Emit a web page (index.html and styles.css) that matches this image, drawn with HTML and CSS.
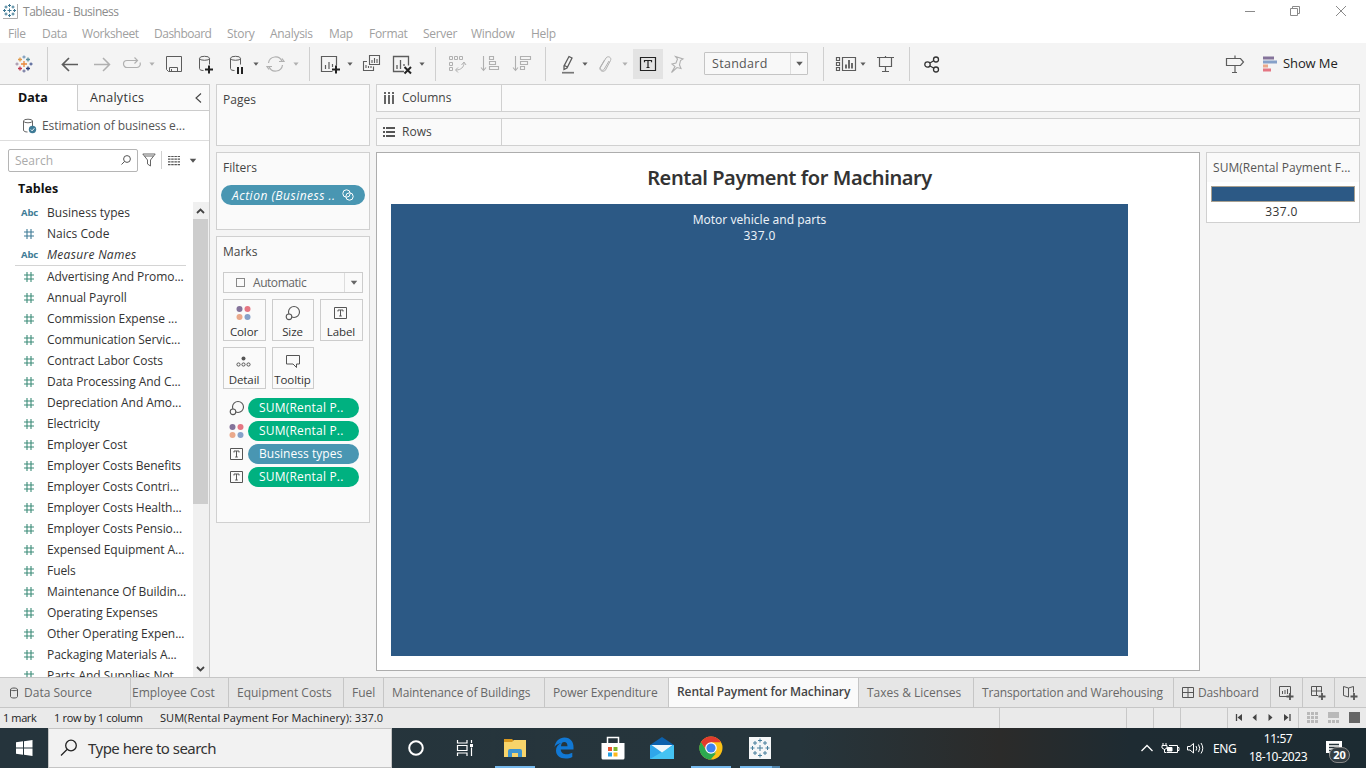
FILE: index.html
```html
<!DOCTYPE html>
<html lang="en">
<head>
<meta charset="utf-8">
<title>Tableau - Business</title>
<link rel="stylesheet" href="styles.css">
</head>
<body>
<svg class="defs" width="0" height="0">
  <symbol id="hash" viewBox="0 0 12 12"><path d="M4 1v10M8 1v10M1 4h10M1 8h10" fill="none" stroke="currentColor" stroke-width="1.1"/></symbol>
  <symbol id="caret" viewBox="0 0 6 4"><path d="M.4.5h5.200L3 3.700z" fill="currentColor"/></symbol>
  <symbol id="tbox" viewBox="0 0 16 16"><path d="M1.500 2.500h12v11h-12z" fill="none" stroke="currentColor"/><path d="M5 6.500v-1.500h5v1.500M7.500 5v6M6.200 11h2.600" fill="none" stroke="currentColor"/></symbol>
  <symbol id="dots" viewBox="0 0 16 16"><circle cx="3.500" cy="4" r="3" fill="#84739a"/><circle cx="11.500" cy="4" r="3" fill="#e57683"/><circle cx="3.500" cy="12" r="3" fill="#eaa98b"/><circle cx="11.500" cy="12" r="3" fill="#86a1c9"/></symbol>
  <symbol id="size" viewBox="0 0 16 16"><circle cx="9" cy="7" r="5.500" fill="none" stroke="currentColor" stroke-width="1.100"/><circle cx="4" cy="11.800" r="2.800" fill="#fafafa" stroke="currentColor" stroke-width="1.100"/></symbol>
</svg>
<div class="app">
  <header class="titlebar">
    <svg class="appicon" viewBox="0 0 16 16" width="16" height="16"><path d="M15.500 1v14.500H1" fill="none" stroke="#aaa"/><path d="M7.500 5.500v4M5.500 7.500h4M7.500 1v3M6 2.500h3M7.500 11v3M6 12.500h3M2.500 6v3M1 7.500h3M12.500 6v3M11 7.500h3M4 2.500v3M2.500 4h3M11 2.500v3M9.500 4h3M4 9.500v3M2.500 11h3M11 9.500v3M9.500 11h3" stroke="#3d7893" fill="none"/></svg>
    <span class="apptitle">Tableau - Business</span>
    <svg class="winbtns" viewBox="0 0 110 20" width="110" height="20" fill="none" stroke="#8a8a8a"><path d="M5 10.500h10M50.500 7.500h7v7h-7zM52.500 7.500v-2h7v7h-2M96 5l10 10M106 5l-10 10"/></svg>
  </header>
  <nav class="menubar"><span class="m-file">File</span><span class="m-data">Data</span><span class="m-work">Worksheet</span><span class="m-dash">Dashboard</span><span class="m-story">Story</span><span class="m-an">Analysis</span><span class="m-map">Map</span><span class="m-for">Format</span><span class="m-ser">Server</span><span class="m-win">Window</span><span>Help</span></nav>
  <div class="toolbar">
    <svg class="i ml12" viewBox="0 0 24 24"><g fill="none" stroke-width="1.300"><path d="M12 9v6M9 12h6" stroke="#e8873a"/><path d="M8 5.500v4M6 7.500h4" stroke="#e09a4a"/><path d="M16 5.500v4M14 7.500h4" stroke="#5b8f9c"/><path d="M8 14.500v4M6 16.500h4" stroke="#c33a50"/><path d="M16 14.500v4M14 16.500h4" stroke="#2f3f76"/><path d="M12 3.500v3M10.500 5h3" stroke="#7d9dbd"/><path d="M12 17.500v3M10.500 19h3" stroke="#7b7fa6"/><path d="M5 10.500v3M3.500 12h3" stroke="#a99aae"/><path d="M19 10.500v3M17.500 12h3" stroke="#5a6a9c"/></g></svg>
    <i class="sep ml11"></i>
    <svg class="i ml10" viewBox="0 0 24 24"><path d="M20 12.500H5M11 6l-6.500 6.500L11 19" fill="none" stroke="#5c5c5c" stroke-width="1.700"/></svg>
    <svg class="i off ml8" viewBox="0 0 24 24"><path d="M4 12.500h15M13 6l6.500 6.500L13 19" fill="none" stroke="currentColor" stroke-width="1.500"/></svg>
    <svg class="i off ml6" viewBox="0 0 24 24"><path d="M17 8.500H7a3.500 3.500 0 0 0 0 7h10a3.500 3.500 0 0 0 3-5M14.500 5.500l3 3-3 3" fill="none" stroke="currentColor" stroke-width="1.200"/></svg>
    <svg class="c off ml5"><use href="#caret"/></svg>
    <svg class="i ml7" viewBox="0 0 24 24"><path d="M4.500 4.500h15v15h-13l-2-2zM7.500 19.500v-4h8v4M9.500 19.500v-2.500" fill="none" stroke="currentColor"/></svg>
    <svg class="i ml8" viewBox="0 0 24 24"><path d="M5.500 6.500v10c0 1.500 2 2 4 2M15.500 6.500v6" fill="none" stroke="currentColor"/><ellipse cx="10.500" cy="6.300" rx="5" ry="2" fill="none" stroke="currentColor"/><path d="M15 13.500v8M11 17.500h8" stroke="#222" stroke-width="2"/></svg>
    <svg class="i ml7" viewBox="0 0 24 24"><path d="M5.500 6.500v10c0 1.500 2 2 4 2M15.500 6.500v6" fill="none" stroke="currentColor"/><ellipse cx="10.500" cy="6.300" rx="5" ry="2" fill="none" stroke="currentColor"/><path d="M13 15v7M17 15v7" stroke="#222" stroke-width="2"/></svg>
    <svg class="c ml4"><use href="#caret"/></svg>
    <svg class="i off ml5" viewBox="0 0 24 24"><path d="M4.500 11A7 7 0 0 1 18 9.500M18.500 13A7 7 0 0 1 5 14.500M15 9.500h5l-2-3M8 14.500H3l2 3" fill="none" stroke="currentColor" stroke-width="1.200"/></svg>
    <svg class="c off ml5"><use href="#caret"/></svg>
    <i class="sep ml10"></i>
    <svg class="i ml8" viewBox="0 0 24 24"><path d="M14.500 19.500h-11v-15h15v9M7.500 13v4M11 10v7M14.500 12v3" fill="none" stroke="currentColor" stroke-width="1.200"/><path d="M18 13.500v8M14 17.500h8" stroke="#222" stroke-width="2"/></svg>
    <svg class="c ml5"><use href="#caret"/></svg>
    <svg class="i ml7" viewBox="0 0 24 24"><path d="M9.500 3.500h10v9h-10zM7 9.500H3.500v9h10v-4M12 8v3M14.500 6v5M17 7v4M6 13v3M8.500 14v2M11 14v2" fill="none" stroke="currentColor" stroke-width="1.100"/></svg>
    <svg class="i ml6" viewBox="0 0 24 24"><path d="M14 19.500H3.500v-15h15v9M7 13v4M10.500 8v9M14 12v2" fill="none" stroke="currentColor" stroke-width="1.300"/><path d="M14.500 15l6.500 6.500M21 15l-6.500 6.500" stroke="#222" stroke-width="2"/></svg>
    <svg class="c ml5"><use href="#caret"/></svg>
    <i class="sep ml10"></i>
    <svg class="i off ml9" viewBox="0 0 24 24"><path d="M4.500 4.500h3v3h-3zM9.500 4.500h3v3h-3zM14.500 4.500h3v3h-3zM4.500 10.500h3v3h-3zM4.500 15.500h3v3h-3zM19 11c0 4-3 7-8 7M16.500 13l2.500-3 2 3M13 15.500L10.500 18l2.500 2.500" fill="none" stroke="currentColor"/></svg>
    <svg class="i off ml9" viewBox="0 0 24 24"><path d="M5.500 4v14M3 15.500l2.500 3 2.500-3M11.500 4.500h4v3h-4zM11.500 9.500h6v3h-6zM11.500 14.500h9v3h-9z" fill="none" stroke="currentColor" stroke-width="1.100"/></svg>
    <svg class="i off ml8" viewBox="0 0 24 24"><path d="M5.500 4v14M3 15.500l2.500 3 2.500-3M10.500 4.500h10v3h-10zM10.500 9.500h7v3h-7zM10.500 14.500h4v3h-4z" fill="none" stroke="currentColor" stroke-width="1.100"/></svg>
    <i class="sep ml11"></i>
    <svg class="i ml10" viewBox="0 0 24 24"><path d="M13 4.500l3 1.500-5 10-3 1.500v-3.500zM8.500 13.500l2.700 1.500" fill="none" stroke="currentColor" stroke-width="1.300"/><path d="M6 20.700h12" stroke="#777" stroke-width="1.700"/></svg>
    <svg class="c ml2"><use href="#caret"/></svg>
    <svg class="i off ml5" viewBox="0 0 24 24"><path d="M16 9l-5 8.500c-1.500 2-4.500 0-3.500-2.200L13 6c2-2.700 6-.500 4.500 2.500L12.500 18c-2 3-6.500.500-5.500-2.500L11.500 8" fill="none" stroke="currentColor"/></svg>
    <svg class="c off ml5"><use href="#caret"/></svg>
    <span class="active ml5"><svg viewBox="0 0 18 16" width="18" height="16"><path d="M1.500 1.500h15v13h-15zM5.500 6.200V4.500h7v1.700M9 4.500v7M7.500 11.500h3" fill="none" stroke="#222" stroke-width="1.200"/></svg></span>
    <svg class="i off ml2" viewBox="0 0 24 24"><path d="M10.500 4.500l7.500 2.500-2.500 1.500-1 4.500 1.500 3.500-4-1-5.500 5 3.500-6-3-2.500 4-1 1.500-4z" fill="none" stroke="currentColor" stroke-width="1.100"/></svg>
    <div class="fit ml15"><span>Standard</span><b><svg width="9" height="5" viewBox="0 0 6 4"><use href="#caret"/></svg></b></div>
    <i class="sep ml15"></i>
    <svg class="i ml10" viewBox="0 0 24 24"><path d="M2.500 5.500h3v3h-3zM2.500 10.500h3v3h-3zM2.500 15.500h3v3h-3zM8.500 5.500h13v13h-13z" fill="none" stroke="currentColor" stroke-width="1.200"/><path d="M12 12.500v4M15 8v8.500M18 11v5.500" stroke="currentColor" stroke-width="1.800"/></svg>
    <svg class="c ml2"><use href="#caret"/></svg>
    <svg class="i ml8" viewBox="0 0 24 24"><path d="M3 5.500h17M5.500 5.500v9h12v-9M11.500 14.500v5M8 19.500h7M11.500 4v1" fill="none" stroke="currentColor" stroke-width="1.200"/></svg>
    <i class="sep ml11"></i>
    <svg class="i ml10" viewBox="0 0 24 24"><path d="M10 11l4-2.500M10 14l4 2.300" stroke="#333" fill="none" stroke-width="1.200"/><g fill="none" stroke="#333" stroke-width="1.300"><circle cx="7.500" cy="12.500" r="2.700"/><circle cx="16" cy="7.500" r="2.500"/><circle cx="16" cy="17.500" r="2.500"/></g></svg>
    <svg class="i ml279" viewBox="0 0 24 24"><path d="M3.500 6.500h14l3 3.500-3 3.500h-14zM12 3.500v3M12 13.500v7M9 20.500h5" fill="none" stroke="currentColor" stroke-width="1.200"/></svg>
    <svg class="i ml11" viewBox="0 0 24 24"><path d="M5 4.500h11v3H5z" fill="#84739a"/><path d="M5 8.500h14v3H5z" fill="#86a1c9"/><path d="M5 12.500h5v3H5z" fill="#eaa98b"/><path d="M5 16.500h8v3H5z" fill="#e57683"/></svg>
    <span class="showme">Show Me</span>
  </div>
  <main class="work">
    <aside class="side">
      <div class="sidetabs"><b>Data</b><span>Analytics<svg width="7" height="10" viewBox="0 0 7 10"><path d="M6 .5L1 5l5 4.500" fill="none" stroke="#444" stroke-width="1.100"/></svg></span></div>
      <div class="source"><svg width="15" height="16" viewBox="0 0 15 16"><path d="M1.500 3v9c0 1.500 2 2 4 2M10.500 3v5" fill="none" stroke="#666"/><ellipse cx="6" cy="3" rx="4.500" ry="1.800" fill="none" stroke="#666"/><circle cx="10.500" cy="11.500" r="3.700" fill="#3e7b96"/><path d="M8.800 11.500l1.300 1.300 2.200-2.500" fill="none" stroke="#fff"/></svg><span>Estimation of business e...</span></div>
      <div class="searchrow">
        <div class="search"><span>Search</span><svg width="10" height="10" viewBox="0 0 10 10"><circle cx="6" cy="4" r="3.400" fill="none" stroke="#555"/><path d="M3.500 6.500L.5 9.500" stroke="#555"/></svg></div>
        <svg class="funnel" width="14" height="14" viewBox="0 0 14 14"><path d="M.8 1h12.400L8.500 7v6l-3-2V7zM2.500 3h9" fill="none" stroke="#666"/></svg>
        <i></i>
        <svg class="grid" width="12" height="11" viewBox="0 0 12 11"><path d="M0 1.500h12M0 4.200h12M0 6.900h12M0 9.600h12" stroke="#555" stroke-width="1.200" stroke-dasharray="2.500 .7"/></svg>
        <svg width="8" height="5" viewBox="0 0 6 4"><use href="#caret"/></svg>
      </div>
      <h2>Tables</h2>
      <div class="fields">
        <div class="list">
          <div class="row dim"><b>Abc</b><span>Business types</span></div>
          <div class="row dim"><svg><use href="#hash"/></svg><span>Naics Code</span></div>
          <div class="row dim"><b>Abc</b><em>Measure Names</em></div>
          <hr>
          <div class="row"><svg><use href="#hash"/></svg><span>Advertising And Promo...</span></div>
          <div class="row"><svg><use href="#hash"/></svg><span>Annual Payroll</span></div>
          <div class="row"><svg><use href="#hash"/></svg><span>Commission Expense ...</span></div>
          <div class="row"><svg><use href="#hash"/></svg><span>Communication Servic...</span></div>
          <div class="row"><svg><use href="#hash"/></svg><span>Contract Labor Costs</span></div>
          <div class="row"><svg><use href="#hash"/></svg><span>Data Processing And C...</span></div>
          <div class="row"><svg><use href="#hash"/></svg><span>Depreciation And Amo...</span></div>
          <div class="row"><svg><use href="#hash"/></svg><span>Electricity</span></div>
          <div class="row"><svg><use href="#hash"/></svg><span>Employer Cost</span></div>
          <div class="row"><svg><use href="#hash"/></svg><span>Employer Costs Benefits</span></div>
          <div class="row"><svg><use href="#hash"/></svg><span>Employer Costs Contri...</span></div>
          <div class="row"><svg><use href="#hash"/></svg><span>Employer Costs Health...</span></div>
          <div class="row"><svg><use href="#hash"/></svg><span>Employer Costs Pensio...</span></div>
          <div class="row"><svg><use href="#hash"/></svg><span>Expensed Equipment A...</span></div>
          <div class="row"><svg><use href="#hash"/></svg><span>Fuels</span></div>
          <div class="row"><svg><use href="#hash"/></svg><span>Maintenance Of Buildin...</span></div>
          <div class="row"><svg><use href="#hash"/></svg><span>Operating Expenses</span></div>
          <div class="row"><svg><use href="#hash"/></svg><span>Other Operating Expen...</span></div>
          <div class="row"><svg><use href="#hash"/></svg><span>Packaging Materials A...</span></div>
          <div class="row"><svg><use href="#hash"/></svg><span>Parts And Supplies Not...</span></div>
        </div>
        <div class="scroll"><svg width="15" height="17" viewBox="0 0 15 17"><path d="M4 11l3.500-3.500L11 11" fill="none" stroke="#444" stroke-width="1.800"/></svg><div class="thumb"></div><svg width="15" height="17" viewBox="0 0 15 17"><path d="M4 7l3.500 3.500L11 7" fill="none" stroke="#444" stroke-width="1.800"/></svg></div>
      </div>
    </aside>
    <section class="cards">
      <div class="card pages"><h3>Pages</h3></div>
      <div class="card filters"><h3>Filters</h3><div class="fpill"><em>Action (Business ..</em><svg width="12" height="12" viewBox="0 0 12 12"><circle cx="4.500" cy="4.500" r="3.700" fill="none" stroke="#fff"/><circle cx="7.500" cy="7.500" r="3.700" fill="none" stroke="#fff"/></svg></div></div>
      <div class="card marks"><h3>Marks</h3>
        <div class="marktype"><i></i><span>Automatic</span><b><svg width="8" height="5" viewBox="0 0 6 4"><use href="#caret"/></svg></b></div>
        <div class="btns">
          <div><svg><use href="#dots"/></svg><span>Color</span></div>
          <div><svg><use href="#size"/></svg><span>Size</span></div>
          <div><svg><use href="#tbox"/></svg><span>Label</span></div>
          <div><svg viewBox="0 0 16 16"><circle cx="7.500" cy="5.500" r="2" fill="#555"/><g fill="none" stroke="#555"><circle cx="2.500" cy="11.500" r="1.600"/><circle cx="7.500" cy="11.500" r="1.600"/><circle cx="12.500" cy="11.500" r="1.600"/></g></svg><span>Detail</span></div>
          <div><svg viewBox="0 0 16 16"><path d="M1.500 2.500h13v8.500h-3v3.500l-3.500-3.500h-6.500z" fill="none" stroke="#555"/></svg><span>Tooltip</span></div>
        </div>
        <div class="pills">
          <div><svg><use href="#size"/></svg><span>SUM(Rental P..</span></div>
          <div><svg><use href="#dots"/></svg><span>SUM(Rental P..</span></div>
          <div><svg><use href="#tbox"/></svg><span class="blue">Business types</span></div>
          <div><svg><use href="#tbox"/></svg><span>SUM(Rental P..</span></div>
        </div>
      </div>
    </section>
    <section class="canvas">
      <div class="shelf"><div><svg width="12" height="12" viewBox="0 0 12 12"><path d="M2 0v2M6 0v2M10 0v2M2 3v9M6 3v9M10 3v9" stroke="#555" stroke-width="1.800"/></svg><span>Columns</span></div></div>
      <div class="shelf"><div><svg width="12" height="12" viewBox="0 0 12 12"><path d="M0 2h2M0 6h2M0 10h2M3 2h9M3 6h9M3 10h9" stroke="#555" stroke-width="1.800"/></svg><span>Rows</span></div></div>
      <div class="viewrow">
        <div class="view"><h1>Rental Payment for Machinary</h1><div class="tile"><span>Motor vehicle and parts</span><span class="num">337.0</span></div></div>
        <div class="legend"><div>SUM(Rental Payment F...</div><i></i><span>337.0</span></div>
      </div>
    </section>
  </main>
  <div class="tabs">
    <div class="t1"><svg width="10" height="12" viewBox="0 0 10 12"><path d="M1.500 2.500v7c0 2 7 2 7 0v-7c0-2-7-2-7 0c0 1.500 7 1.500 7 0" fill="none" stroke="#555"/></svg><span>Data Source</span></div>
    <div class="t2"><span>Employee Cost</span></div><div class="t3"><span>Equipment Costs</span></div><div class="t4"><span>Fuel</span></div><div class="t5"><span>Maintenance of Buildings</span></div><div class="t6"><span>Power Expenditure</span></div><div class="t7"><span>Rental Payment for Machinary</span></div><div class="t8"><span>Taxes &amp; Licenses</span></div><div class="t9"><span>Transportation and Warehousing</span></div>
    <div class="t10"><svg width="12" height="12" viewBox="0 0 12 12"><path d="M.5 .5h11v10H.5zM6 .5v10M.5 5.500h11" fill="none" stroke="#555"/></svg><span>Dashboard</span></div>
    <div class="tn"><svg width="16" height="16" viewBox="0 0 16 16"><path d="M9 11.500H1.500v-10h11v7M4.500 6v3M7 5v4M9.500 4v5" fill="none" stroke="#555"/><path d="M12 8v7M8.500 11.500h7" stroke="#555" stroke-width="1.800"/></svg></div>
    <div class="tn"><svg width="16" height="16" viewBox="0 0 16 16"><path d="M8 10.500H1.500v-9h10v6M6.500 1.500v9M1.500 6h10" fill="none" stroke="#555"/><path d="M12 8v7M8.500 11.500h7" stroke="#555" stroke-width="1.800"/></svg></div>
    <div class="tn"><svg width="16" height="16" viewBox="0 0 16 16"><path d="M6.500 3L1.500 1.500v9l5 1.500zM6.500 3l5-1.500v6" fill="none" stroke="#555"/><path d="M12 8v7M8.500 11.500h7" stroke="#555" stroke-width="1.800"/></svg></div>
  </div>
  <div class="status">
    <span class="s1">1 mark</span><span class="s2">1 row by 1 column</span><span class="s3">SUM(Rental Payment For Machinery): 337.0</span>
    <i class="c1"></i><i class="c2"></i><i class="c3"></i><i class="c4"></i>
    <div class="pager"><svg width="70" height="20" viewBox="0 0 70 20"><path d="M8.500 6v7M62 6v7" stroke="#444" stroke-width="1.300"/><path d="M14 6v7L9.500 9.500zM28.500 6v7l-4-3.500zM40.500 6v7l4-3.500zM56 6v7l4.500-3.500z" fill="#444"/></svg></div>
    <div class="modes"><svg width="50" height="20" viewBox="0 0 50 20"><path d="M8 4h3v3H8zM12 4h3v3h-3zM16 4h3v3h-3zM8 8h3v3H8zM12 8h3v3h-3zM16 8h3v3h-3zM8 12h3v3H8zM12 12h3v3h-3zM16 12h3v3h-3zM29 4h11v6H29zM29 12h3v3h-3zM33 12h3v3h-3zM37 12h3v3h-3z" fill="#b9b9b9"/><path d="M50 4h11v11H50z" fill="#666"/></svg></div>
  </div>
  <footer class="taskbar">
    <div class="start"><svg width="17" height="16" viewBox="0 0 17 16"><path d="M0 2.300L7 1.300V7.500H0zM8 1.200L16.500 0v7.500H8zM0 8.500h7v6.200l-7-1zM8 8.500h8.500V16L8 14.800z" fill="#fff"/></svg></div>
    <div class="tsearch"><svg width="18" height="18" viewBox="0 0 18 18"><circle cx="11" cy="6.500" r="5.300" fill="none" stroke="#222" stroke-width="1.300"/><path d="M7 10.500L1 16.500" stroke="#222" stroke-width="1.300"/></svg><span>Type here to search</span></div>
    <div class="tb tbc"><svg width="18" height="18" viewBox="0 0 18 18"><circle cx="9" cy="9" r="6.800" fill="none" stroke="#fff" stroke-width="2"/></svg></div>
    <div class="tb"><svg width="18" height="18" viewBox="0 0 18 18"><path d="M1.500 1v3h9.500V1M1.500 17v-3h9.500v3M1.500 6.500h9.500v5H1.500zM15.500 1v3M15.500 8.500V17" fill="none" stroke="#fff" stroke-width="1.200"/><path d="M14 5h3v3h-3z" fill="#fff"/></svg></div>
    <div class="tb on tbf"><svg width="22" height="20" viewBox="0 0 22 20"><path d="M0 1h8l2 2v4H0z" fill="#d9981e"/><path d="M0 4h8l2-2h12v17H0z" fill="#f8d46a"/><path d="M4 19v-6q0-2 2-2h10q2 0 2 2v6h-4v-4H8v4z" fill="#3f95cf"/></svg></div>
    <div class="tb tbe"><svg width="20" height="22" viewBox="0 0 20 22"><path d="M.500 10C1.500 4 5.500.500 10.500.500c6 0 9 4.500 9 9.500v2.500H6.700c.3 3.500 3 4.800 6 4.800 2 0 4-.600 5.600-1.500v4.200c-2 1.100-4.300 1.500-6.500 1.500C5.500 21.500 2 18 2 13.500 2 10 4 7.200 7.200 6 5 6.300 2 7.500.500 10zM7 9.200h6.500C13.500 6.500 12.300 5 10.300 5 8.300 5 7.200 6.600 7 9.200z" fill="#1178d4"/></svg></div>
    <div class="tb tbs"><svg width="24" height="24" viewBox="0 0 24 24"><path d="M6.500 8V1.500h11V8" fill="none" stroke="#fff" stroke-width="1.500"/><path d="M.5 7h23v15q0 1.500-1.500 1.500H2Q.5 23.500.5 22z" fill="#fff"/><path d="M7 11h4v4H7z" fill="#e9532e"/><path d="M12.500 11h4v4h-4z" fill="#7eb72b"/><path d="M7 16.500h4v4H7z" fill="#25a0e5"/><path d="M12.500 16.500h4v4h-4z" fill="#fdb91c"/></svg></div>
    <div class="tb tbm"><svg width="24" height="22" viewBox="0 0 24 22"><path d="M0 8L12 0l12 8v3H0z" fill="#0c61ad"/><path d="M0 8h24v14H0z" fill="#2fa6ea"/><path d="M0 22L24 8v14z" fill="#45c3f3"/><path d="M1.500 8h21L12 15.500z" fill="#eef7fb"/></svg></div>
    <div class="tb on tbg"><svg width="24" height="24" viewBox="0 0 24 24"><circle cx="12" cy="12" r="11.500" fill="#fbc116"/><path d="M12 12L2 6.250A11.500 11.500 0 0 1 22 6.250H12z" fill="#e33b2e"/><path d="M2 6.250A11.500 11.500 0 0 0 11.500 23.500L17 15 12 12 7 14z" fill="#2da94f"/><path d="M2 6.200L9 4l5 8-6 3z" fill="#e33b2e"/><path d="M2 6.250L7 15l5 2.500H17L11.500 23.500A11.500 11.500 0 0 1 2 6.250z" fill="#2da94f"/><circle cx="12" cy="12" r="5.800" fill="#fff"/><circle cx="12" cy="12" r="4.600" fill="#3f83ef"/></svg></div>
    <div class="tb on two"><svg width="22" height="22" viewBox="0 0 22 22"><path d="M0 0h22v22H0z" fill="#f5f7f8"/><path d="M11 8v6M8 11h6M11 1.500v4M9 3.500h4M11 16.500v4M9 18.500h4M3.500 9v4M1.500 11h4M18.500 9v4M16.500 11h4M6 4v4M4 6h4M16 4v4M14 6h4M6 14v4M4 16h4M16 14v4M14 16h4" stroke="#477f9c" fill="none"/></svg></div>
    <div class="tray">
      <svg width="72" height="20" viewBox="0 0 72 20" fill="none" stroke="#fff"><path d="M1.500 13L7 7.500l5.500 5.500" stroke-width="1.300"/><path d="M29 7.500h8.500v7H27M37.500 9.500h1.500v3h-1.500M23 5v2M26 5v2M22 7.500h5v2.500l-2.500 1.500-2.500-1.500zM24.500 11v3.500h2"/><path d="M27.500 9.500H32v3.500h-4.500z" fill="#fff"/><path d="M47.500 8.500h2.500l3.500-3v9.500l-3.500-3h-2.500zM56 8q1.500 2.300 0 4.600M58.500 6.500q2.500 3.800 0 7.600M61 5q3.500 5.300 0 10.500"/></svg>
      <span class="lang">ENG</span>
      <div class="clock"><span>11:57</span><span class="date">18-10-2023</span></div>
      <div class="note"><svg width="18" height="18" viewBox="0 0 18 18"><path d="M1 1h16v12H7l-3 3v-3H1z" fill="#fff"/><path d="M4 4.500h10M4 7.500h10M4 10.500h6" stroke="#26343b" stroke-width="1.300"/></svg><b>20</b></div>
    </div>
  </footer>
</div>
</body>
</html>
```
FILE: styles.css
```css
* { box-sizing: border-box; }
html, body { margin: 0; height: 100%; overflow: hidden; }
body { font-family: "Open Sans", "Noto Sans", sans-serif; font-size: 12px; color: #333; background: #fff; }
h1, h2, h3 { margin: 0; }
span, b, em { white-space: nowrap; }
.defs { display: none; }
.app { width: 1366px; height: 768px; display: flex; flex-direction: column; background: #f4f4f4; }

.titlebar { height: 22px; flex: none; display: flex; align-items: center; padding-left: 2px; background: #fff; }
.apptitle { margin: 1px 0 0 5px; color: #8c8c8c; letter-spacing: -.46px; }
.winbtns { margin-left: auto; margin-right: 16px; }
.menubar { height: 21px; flex: none; display: flex; align-items: center; padding: 3px 0 0 8px; background: #fff; color: #a0a0a0; letter-spacing: -.3px; }
.menubar span { line-height: 16px; }
.m-file { width: 34px; } .m-data { width: 40px; } .m-work { width: 72px; letter-spacing: -.4px; } .m-dash { width: 73px; letter-spacing: -.5px; } .m-story { width: 43px; } .m-an { width: 59px; } .m-map { width: 40px; } .m-for { width: 54px; } .m-ser { width: 48px; } .m-win { width: 60px; }

.m-work { letter-spacing: -.4px; }
.toolbar { height: 41px; flex: none; display: flex; align-items: center; color: #5c5c5c; }
.i { width: 24px; height: 24px; flex: none; }
.c { width: 6px; height: 4px; flex: none; }
.off { color: #b0b0b0; }
.sep { width: 1px; height: 34px; background: #cfcfcf; flex: none; }
.ml2 { margin-left: 2px; } .ml4 { margin-left: 4px; } .ml5 { margin-left: 5px; } .ml6 { margin-left: 6px; } .ml7 { margin-left: 7px; } .ml8 { margin-left: 8px; } .ml9 { margin-left: 9px; } .ml10 { margin-left: 10px; } .ml11 { margin-left: 11px; } .ml12 { margin-left: 12px; } .ml15 { margin-left: 15px; } .ml279 { margin-left: 279px; }
.active { width: 30px; height: 30px; background: #e3e3e3; display: flex; align-items: center; justify-content: center; flex: none; }
.fit { width: 104px; height: 23px; border: 1px solid #c4c4c4; border-radius: 1px; display: flex; flex: none; line-height: 21px; background: #f8f8f8; }
.fit span { width: 85px; padding-left: 7px; letter-spacing: .3px; font-size: 12.500px; color: #555; }
.fit b { flex: 1; border-left: 1px solid #ddd; display: flex; align-items: center; justify-content: center; }
.showme { margin: -2px 0 0 1px; font-size: 13px; letter-spacing: -.1px; color: #222; }

.work { height: 593px; flex: none; display: flex; }
.side { width: 210px; flex: none; background: #fff; border-right: 1px solid #ccc; border-top: 1px solid #ccc; display: flex; flex-direction: column; }
.sidetabs { height: 26px; flex: none; display: flex; line-height: 25px; font-size: 12.500px; }
.sidetabs b { width: 77px; padding-left: 18px; color: #111; }
.sidetabs span { flex: 1; display: flex; align-items: center; border: solid #ccc; border-width: 0 0 1px 1px; padding: 0 7px 0 12px; background: #fafafa; letter-spacing: .3px; }
.sidetabs svg { margin-left: auto; }
.source { height: 30px; flex: none; border-bottom: 1px solid #ddd; display: flex; align-items: center; padding-left: 22px; color: #555; }
.source span { margin: -1px 0 0 5px; letter-spacing: -.08px; }
.searchrow { height: 38px; flex: none; display: flex; align-items: center; padding-left: 8px; color: #555; }
.search { width: 130px; height: 23px; border: 1px solid #b5b5b5; border-radius: 2px; display: flex; align-items: center; justify-content: space-between; padding: 0 6px; color: #aaa; }
.funnel { margin-left: 4px; }
.searchrow i { width: 1px; height: 18px; background: #d0d0d0; margin: 0 6px 0 5px; }
.grid { margin-right: 9px; }
.side h2 { height: 23px; flex: none; font-size: 12.500px; line-height: 17px; padding: 1px 0 0 18px; color: #111; }
.fields { flex: 1; min-height: 0; display: flex; }
.list { width: 193px; overflow: hidden; letter-spacing: -.06px; }
.row { height: 21px; display: flex; align-items: center; padding-left: 21px; color: #3c8c78; }
.row.dim { color: #3e7b96; letter-spacing: .03px; }
.row b { width: 26px; font-size: 9.500px; letter-spacing: -.1px; }
.row svg { width: 12px; height: 12px; margin: 0 12px 0 2px; }
.row span, .row em { color: #333; margin-top: -1px; }
.row em { letter-spacing: .3px; }
.list hr { height: 1px; border: 0; margin: 0 7px 0 15px; background: #d4d4d4; }
.scroll { width: 16px; background: #f0f0f0; display: flex; flex-direction: column; }
.scroll svg { flex: none; }
.thumb { height: 285px; background: #cdcdcd; margin: 0 1px 0 0; }
.scroll svg:last-child { margin-top: auto; }

.cards { width: 154px; flex: none; margin-left: 6px; display: flex; flex-direction: column; gap: 6px; }
.card { border: 1px solid #d0d0d0; background: #fafafa; }
.card h3 { font-size: 12px; font-weight: 400; line-height: 17px; padding: 6px 0 0 6px; color: #444; }
.pages { height: 62px; } .filters { height: 78px; } .marks { height: 287px; }
.fpill { margin: 9px 0 0 4px; width: 144px; height: 20px; border-radius: 10px; background: #4996b2; color: #fff; display: flex; align-items: center; justify-content: space-between; padding: 0 11px 0 11px; font-weight: 500; letter-spacing: .5px; }
.marktype { margin: 12px 6px 0; height: 21px; border: 1px solid #ccc; display: flex; align-items: center; color: #666; letter-spacing: -.4px; letter-spacing: -.45px; }
.marktype span { letter-spacing: -.45px; }
.marktype i { width: 9px; height: 9px; border: 1px solid #888; margin: 0 8px 0 12px; }
.marktype b { margin-left: auto; width: 18px; align-self: stretch; border-left: 1px solid #ddd; display: flex; align-items: center; justify-content: center; }
.btns { display: grid; grid-template-columns: 43px 42px 43px; gap: 6px; padding: 6px; }
.btns div { height: 42px; border: 1px solid #ccc; display: flex; flex-direction: column; align-items: center; padding: 5px 1px 0 0; color: #555; font-size: 11.500px; letter-spacing: -.1px; }
.btns svg { width: 16px; height: 16px; flex: none; }
.btns span { color: #333; line-height: 15px; margin-top: 3px; }
.pills { display: flex; flex-direction: column; gap: 3px; padding: 3px 0 0 12px; color: #555; }
.pills div { display: flex; align-items: center; }
.pills svg { width: 16px; height: 16px; margin-right: 3px; }
.pills span { width: 111px; height: 20px; line-height: 19px; border-radius: 10px; background: #00b180; color: #fff; padding-left: 11px; font-weight: 500; letter-spacing: .2px; }
.pills .blue { background: #4996b2; letter-spacing: .05px; }

.canvas { width: 984px; margin-left: 6px; display: flex; flex-direction: column; gap: 6px; }
.shelf { height: 28px; flex: none; border: 1px solid #d0d0d0; background: #fafafa; display: flex; }
.shelf div { width: 125px; border-right: 1px solid #d0d0d0; display: flex; align-items: center; padding: 0 0 1px 6px; gap: 7px; color: #444; }
.viewrow { display: flex; gap: 6px; align-items: flex-start; }
.view { width: 824px; height: 519px; background: #fff; border: 1px solid #adadad; }
.view h1 { height: 51px; padding-left: 3px; text-align: center; font-family: "Noto Sans", sans-serif; font-size: 20px; line-height: 49px; font-weight: 600; letter-spacing: -.42px; color: #333; }
.tile { margin-left: 14px; width: 737px; height: 452px; background: #2c5985; color: #eaf0f6; display: flex; flex-direction: column; align-items: center; padding-top: 8px; line-height: 16px; font-family: "Noto Sans", sans-serif; }
.tile .num { letter-spacing: .3px; }
.legend { width: 154px; height: 71px; border: 1px solid #d0d0d0; background: #fff; display: flex; flex-direction: column; align-items: center; }
.legend div { width: 152px; height: 29px; line-height: 29px; background: #fafafa; padding-left: 6px; white-space: nowrap; color: #555; letter-spacing: .05px; }
.legend i { width: 144px; height: 16px; margin-top: 4px; background: #2c5985; border: 1px solid #a8a090; }
.legend span { line-height: 20px; letter-spacing: .4px; padding-right: 3px; }

.tabs { height: 31px; flex: none; display: flex; border-top: 1px solid #c6c6c6; border-bottom: 1px solid #c6c6c6; background: #e6e6e6; color: #686868; }
.tabs div { flex: none; border-right: 1px solid #c6c6c6; display: flex; align-items: center; padding-left: 8px; overflow: hidden; }
.tabs .t1 { width: 131px; padding-left: 9px; gap: 5px; } .tabs .t2 { width: 98px; padding-left: 1px; } .t3 { width: 115px; } .t4 { width: 40px; } .t5 { width: 161px; letter-spacing: -.13px; } .t6 { width: 124px; letter-spacing: -.12px; } .t7 { width: 190px; } .t8 { width: 115px; } .t9 { width: 200px; letter-spacing: -.14px; } .t10 { width: 97px; gap: 4px; letter-spacing: -.15px; }
.t7 { background: #fafafa; font-weight: 600; color: #444; padding-bottom: 2px; letter-spacing: -.1px; }
.tabs .tn { width: 32px; padding-left: 7px; }
.status { height: 20px; flex: none; display: flex; align-items: center; background: #eaeaea; font-size: 11px; color: #222; padding-left: 3px; }
.status span { margin-top: -2px; flex: none; }
.s1 { width: 51px; letter-spacing: -.4px; } .s2 { width: 106px; letter-spacing: -.32px; } .s3 { width: 839px; letter-spacing: .05px; }
.status i { height: 20px; border-left: 1px solid #c8c8c8; flex: none; }
.c1 { width: 127px; } .c2 { width: 27px; } .c3 { width: 27px; } .c4 { width: 47px; }
.pager { width: 71px; height: 20px; border-left: 1px solid #c8c8c8; flex: none; }
.modes { height: 20px; border-left: 1px solid #c8c8c8; flex: none; }
.pager svg, .modes svg { display: block; overflow: visible; }

.taskbar { height: 40px; flex: none; display: flex; background: linear-gradient(90deg, #25343c 0, #26353c 800px, #2b2b2a 1000px, #1e2b32 1130px, #1c2b32 100%); color: #fff; font-family: "Noto Sans", sans-serif; }
.start { width: 48px; display: flex; align-items: center; justify-content: center; }
.tsearch { width: 344px; background: #f2f2f2; border: 1px solid #c4c4c4; display: flex; align-items: center; padding-left: 11px; gap: 10px; color: #333; font-size: 15px; letter-spacing: -.53px; }
.tb { width: 48px; height: 40px; display: flex; align-items: center; justify-content: center; margin-right: 1px; flex: none; }
.on { box-shadow: inset 4px 0 #26353c, inset -4px 0 #26353c, inset 0 -2px #76b9ed; }
.two { background: linear-gradient(#5386ae, #5386ae) 44px 38px / 4px 2px no-repeat; box-shadow: inset 4px 0 #26353c, inset 0 -2px #76b9ed; box-shadow: none; background: linear-gradient(90deg, transparent 4px, #76b9ed 4px, #76b9ed 36px, #4f83aa 36px, #4f83aa 44px, transparent 44px) 0 38px / 48px 2px no-repeat; }
.tb.tbf { margin-left: 1px; } .tb.tbm { margin-right: 1px; }
.tray { margin-left: auto; display: flex; align-items: center; }
.tray > svg { flex: none; }
.lang { margin-left: 1px; width: 29px; letter-spacing: -.4px; }
.clock { width: 72px; display: flex; flex-direction: column; align-items: center; line-height: 18px; letter-spacing: -.45px; }
.note { position: relative; width: 41px; height: 40px; margin-left: 11px; padding-top: 12px; }
.note b { position: absolute; left: 4px; top: 19px; width: 21px; height: 16px; line-height: 14px; text-align: center; border: 1px solid #888; border-radius: 8px; background: #333d43; font-size: 11px; }
```
